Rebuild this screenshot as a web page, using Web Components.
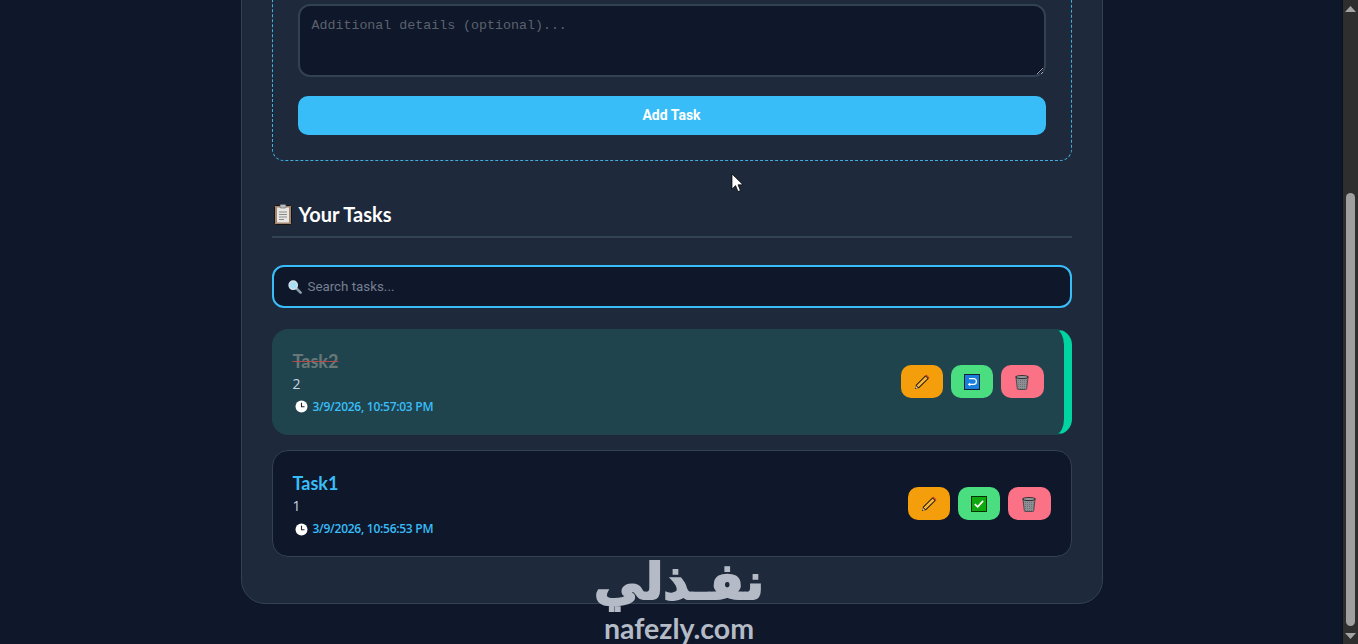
<!DOCTYPE html>
<html lang="en">

<head>
  <meta charset="UTF-8">
  <title>Task Manager</title>
  <style>
    html, body {
      height: 100%;
      margin: 0;
      overflow: hidden;
      background: #0f172a;
    }
  </style>
</head>

<body>
  <task-app>
    <task-form></task-form>
    <section-title>Your Tasks</section-title>
    <search-box></search-box>
    <task-item title-text="Task2" desc="2" time="3/9/2026, 10:57:03 PM" done></task-item>
    <task-item title-text="Task1" desc="1" time="3/9/2026, 10:56:53 PM"></task-item>
  </task-app>

  <script>
    const ICONS = {
      clipboard: `<svg width="18" height="21" viewBox="0 0 18 21"><rect x=".5" y="1.5" width="17" height="19" rx="1" fill="#a08672" stroke="#1a1410"/><rect x="3" y="3.5" width="12" height="15" fill="#e8e6e2"/><rect x="6" y=".5" width="6" height="3.5" rx="1" fill="#b9bcc0" stroke="#5d5d5d" stroke-width=".6"/><path d="M5 8h8M5 10.5h8M5 13h8M5 15.5h5" stroke="#8a8a8a" stroke-width="1.1"/></svg>`,
      search: `<svg width="14" height="14" viewBox="0 0 14 14"><path d="M8 8l4.6 4.6" stroke="#8b9ba8" stroke-width="2.6" stroke-linecap="round"/><circle cx="5.2" cy="5.2" r="4.2" fill="#a9dcf5" stroke="#d8e2e8" stroke-width="1.3"/></svg>`,
      clock: `<svg width="13" height="13" viewBox="0 0 13 13"><circle cx="6.5" cy="6.5" r="6" fill="#fff"/><path d="M6.5 2.8v3.9h3" fill="none" stroke="#222" stroke-width="1.1"/></svg>`,
      pencil: `<svg width="16" height="16" viewBox="0 0 16 16"><path d="M1 15l1-4.2L11.6 1.2l3.2 3.2L5.200 14z" fill="#1b1208"/><path d="M2.600 11.400L11.600 2.500l1.900 1.900-9 8.900z" fill="#f6b73c"/><path d="M11.500 1.300l1-.8 3 3-.7 1z" fill="#d8433b"/><path d="M1 15l.8-3.200 2.400 2.400z" fill="#e8c9a0"/><path d="M1 15l.4-1.500 1.100 1.100z" fill="#111"/></svg>`,
      undo: `<svg width="16" height="16" viewBox="0 0 16 16"><rect x=".5" y=".5" width="15" height="15" fill="#1a7fdc" stroke="#123"/><path d="M5 4.600h4.500a2.600 2.600 0 0 1 0 5.800H4.300" fill="none" stroke="#fff" stroke-width="1.200"/><path d="M6.200 8.600l-2.200 1.800 2.200 1.800z" fill="#fff"/></svg>`,
      check: `<svg width="16" height="16" viewBox="0 0 16 16"><rect x=".5" y=".5" width="15" height="15" fill="#10a810" stroke="#063306"/><path d="M3.800 8.200l2.900 2.700 5.400-6" fill="none" stroke="#fff" stroke-width="1.700"/></svg>`,
      trash: `<svg width="16" height="16" viewBox="0 0 16 16"><defs><pattern id="m" width="2" height="2" patternUnits="userSpaceOnUse"><rect width="2" height="2" fill="#8c9094"/><rect width="1" height="1" fill="#6f7276"/></pattern></defs><path d="M2 3.500h12l-1.300 11a1 1 0 0 1-1 1H4.300a1 1 0 0 1-1-1z" fill="url(#m)" stroke="#3a3c3e" stroke-width=".8"/><ellipse cx="8" cy="3" rx="6.800" ry="2" fill="#2e3032"/><ellipse cx="8" cy="3" rx="5.400" ry="1.100" fill="#95989b"/></svg>`
    };

    class TaskApp extends HTMLElement {
      constructor() {
        super();
        this.attachShadow({ mode: 'open' });
        this.shadowRoot.innerHTML = `
        <style>
          :host {
            display: flex;
            height: 100vh;
            position: relative;
            font-family: 'Roboto', sans-serif;
            color: #fff;
          }
          .page {
            flex: 1;
            min-width: 0;
            overflow: hidden;
            display: flex;
            flex-direction: column;
            justify-content: flex-end;
            align-items: center;
            padding-bottom: 40px;
            background: #0f172a;
          }
          .card {
            flex: none;
            box-sizing: border-box;
            width: 862px;
            padding: 40px 30px 46px 30px;
            background: #1e293b;
            border: 1px solid #334155;
            border-radius: 24px;
          }
          .bar {
            flex: none;
            width: 15px;
            display: flex;
            flex-direction: column;
            align-items: center;
            background: #2e2e2e;
            box-shadow: -1px 0 0 #0a1122;
          }
          .arrow {
            flex: none;
            height: 17px;
            display: flex;
            align-items: center;
            justify-content: center;
          }
          .gap { flex: none; height: 176px; }
          .thumb {
            flex: none;
            width: 9px;
            height: 433px;
            border-radius: 5px;
            background: #9f9f9f;
          }
          .end { flex: 1; }
          .cursor { position: absolute; left: 731px; top: 173px; }
          .logo {
            position: absolute;
            left: 590px;
            top: 556px;
            width: 178px;
            text-align: center;
            color: #b4bbc6;
            pointer-events: none;
          }
          .ar {
            font: bold 50px/52px 'DejaVu Sans', sans-serif;
            -webkit-text-stroke: 2px #b4bbc6;
            white-space: nowrap;
          }
          .en {
            font: 700 28.500px/30px 'Lato', sans-serif;
            margin-top: 5px;
          }
        </style>
        <div class="page">
          <div class="card"><slot></slot></div>
        </div>
        <div class="bar">
          <div class="arrow"><svg width="11" height="6"><path d="M5.500 0L11 6H0z" fill="#a3a3a3"/></svg></div>
          <div class="gap"></div>
          <div class="thumb"></div>
          <div class="end"></div>
          <div class="arrow"><svg width="11" height="6"><path d="M0 0h11L5.500 6z" fill="#a3a3a3"/></svg></div>
        </div>
        <svg class="cursor" width="13" height="20" viewBox="0 0 13 20"><path d="M1 1v15l3.600-3.400 2.400 6 2.400-1-2.400-5.800h5z" fill="#fff" stroke="#000" stroke-width=".7"/></svg>
        <div class="logo">
          <div class="ar" dir="rtl">نفـذلي</div>
          <div class="en">nafezly.com</div>
        </div>
      `;
      }
    }

    class TaskForm extends HTMLElement {
      constructor() {
        super();
        this.attachShadow({ mode: 'open' });
        this.shadowRoot.innerHTML = `
        <style>
          :host {
            display: flex;
            flex-direction: column;
            gap: 19px;
            padding: 30px 25px 25px;
            border: 1px dashed #40b0e0;
            border-radius: 12px;
          }
          textarea {
            display: block;
            box-sizing: border-box;
            width: 100%;
            height: 73px;
            padding: 12px;
            background: #0f172a;
            border: 2px solid #334155;
            border-radius: 12px;
            color: #fff;
            font: 13.300px 'Liberation Mono', monospace;
            outline: none;
            resize: vertical;
          }
          textarea::placeholder { color: #5c626c; opacity: 1; }
          button {
            height: 39px;
            padding: 0 0 2px;
            border: 0;
            border-radius: 10px;
            background: #38bdf8;
            color: #fff;
            font: 700 14px 'Roboto', sans-serif;
          }
        </style>
        <textarea placeholder="Additional details (optional)..."></textarea>
        <button>Add Task</button>
      `;
      }
    }

    class SectionTitle extends HTMLElement {
      constructor() {
        super();
        this.attachShadow({ mode: 'open' });
        this.shadowRoot.innerHTML = `
        <style>
          :host {
            display: flex;
            align-items: center;
            gap: 7px;
            margin-top: 40px;
            padding-bottom: 9px;
            border-bottom: 2px solid #334155;
            font: 700 20px/26px 'Lato', sans-serif;
            color: #fff;
          }
          svg { margin-left: 2px; }
        </style>
        ${ICONS.clipboard}<slot></slot>
      `;
      }
    }

    class SearchBox extends HTMLElement {
      constructor() {
        super();
        this.attachShadow({ mode: 'open' });
        this.shadowRoot.innerHTML = `
        <style>
          :host {
            display: flex;
            align-items: center;
            gap: 6px;
            box-sizing: border-box;
            height: 43px;
            margin: 27px 0 21px;
            padding: 0 14px;
            background: #0f172a;
            border: 2px solid #38bdf8;
            border-radius: 12px;
          }
          input {
            flex: 1;
            padding: 0;
            border: 0;
            outline: none;
            background: none;
            color: #fff;
            font: 13.333px 'Roboto', sans-serif;
          }
          input::placeholder { color: #758092; opacity: 1; }
        </style>
        ${ICONS.search}<input placeholder="Search tasks...">
      `;
      }
    }

    class IconButton extends HTMLElement {
      constructor() {
        super();
        this.attachShadow({ mode: 'open' });
        this.shadowRoot.innerHTML = `
        <style>
          :host {
            display: flex;
            align-items: center;
            justify-content: center;
            width: 42px;
            height: 33px;
            border-radius: 10px;
            background: var(--btn, #f59e0b);
          }
        </style>
        <slot></slot>
      `;
      }
    }

    class TaskItem extends HTMLElement {
      constructor() {
        super();
        this.attachShadow({ mode: 'open' });
      }

      connectedCallback() {
        const done = this.hasAttribute('done');
        this.shadowRoot.innerHTML = `
        <style>
          :host {
            display: flex;
            align-items: center;
            justify-content: space-between;
            box-sizing: border-box;
            height: 107px;
            margin-bottom: 15px;
            padding: 0 20px;
            background: #0f172a;
            border: 1px solid #334155;
            border-radius: 16px;
          }
          :host([done]) {
            height: 106px;
            background: #1f444e;
            border-color: #1f444e;
            border-right: 8px solid #00d4a0;
          }
          :host(:last-child) { margin-bottom: 0; }
          :host(:not([done])) .info { margin-top: 2px; }
          :host([done]) .actions { margin-bottom: 1px; }
          h3 {
            margin: 0;
            font: 700 18px/24px 'Lato', sans-serif;
            color: #38bdf8;
          }
          :host([done]) h3 {
            color: #687878;
            text-decoration: line-through #b04a4a;
          }
          p {
            margin: 2px 0 5px;
            font: 14px/18px 'Open Sans', sans-serif;
            color: #cbd5e1;
          }
          .time {
            display: flex;
            align-items: center;
            gap: 5px;
            padding-left: 2px;
            font: 600 12px/18px 'Open Sans', sans-serif;
            letter-spacing: -.26px;
            color: #38bdf8;
          }
          .actions { display: flex; gap: 8px; }
          .del { width: 43px; }
        </style>
        <div class="info">
          <h3>${this.getAttribute('title-text')}</h3>
          <p>${this.getAttribute('desc')}</p>
          <div class="time">${ICONS.clock}<span>${this.getAttribute('time')}</span></div>
        </div>
        <div class="actions">
          <icon-button style="--btn:#f59e0b">${ICONS.pencil}</icon-button>
          <icon-button style="--btn:#4ade80">${done ? ICONS.undo : ICONS.check}</icon-button>
          <icon-button class="del" style="--btn:#fb7185">${ICONS.trash}</icon-button>
        </div>
      `;
      }
    }

    customElements.define('task-app', TaskApp);
    customElements.define('task-form', TaskForm);
    customElements.define('section-title', SectionTitle);
    customElements.define('search-box', SearchBox);
    customElements.define('icon-button', IconButton);
    customElements.define('task-item', TaskItem);
  </script>

</body>

</html>
